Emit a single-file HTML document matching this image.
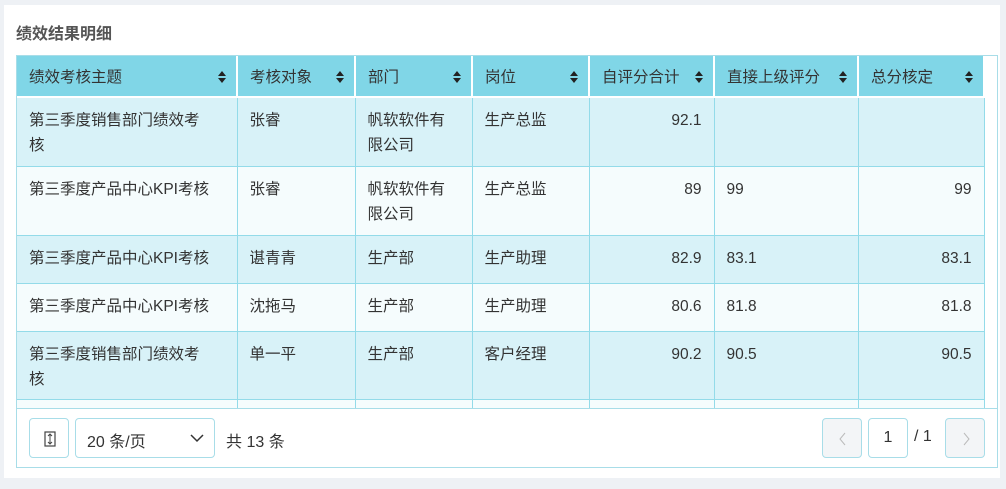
<!DOCTYPE html>
<html><head><meta charset="utf-8"><style>
*{box-sizing:border-box;margin:0;padding:0}
body{width:1006px;height:489px;background:#eef1f5;font-family:"Liberation Sans","Noto Sans CJK SC",sans-serif;color:#333;font-size:14px;position:relative;overflow:hidden}
.card{position:absolute;left:4px;top:5px;width:996px;height:473px;background:#fff}
.title{position:absolute;left:16px;top:20px;font-size:16px;font-weight:bold;color:#555}
.wrap{position:absolute;left:16px;top:55px;width:982px;height:413px;border:1px solid #a8dde8;overflow:hidden}
table{border-collapse:collapse;position:absolute;left:0;top:0;table-layout:fixed}
th{background:#80d6e7;height:41px;font-weight:normal;text-align:left;padding:0 12px;border-right:2px solid #fff;border-bottom:2px solid #fff;position:relative;font-size:15.5px;color:#333}
th .s{position:absolute;right:10px;top:14px;width:8px;height:14px}
td{border-right:1px solid #93dbe9;border-bottom:1px solid #93dbe9;padding:10px 12px 0 12px;vertical-align:top;line-height:25px;font-size:15.5px;white-space:nowrap}
tr.a td{background:#d8f2f8}
tr.b td{background:#f5fcfd}
td.r{text-align:right;padding-right:12px}
.foot{position:absolute;left:0;top:352px;width:980px;height:60px;background:#fff;border-top:1px solid #a8dde8}
.btn{position:absolute;top:9px;height:40px;border:1px solid #a8dde8;border-radius:4px;background:#fff}
</style></head><body>
<div class="card"></div>
<div class="title">绩效结果明细</div>
<div class="wrap">
<table>
<colgroup><col style="width:220px"><col style="width:118px"><col style="width:117px"><col style="width:117px"><col style="width:125px"><col style="width:144px"><col style="width:126px"></colgroup>
<tr>
<th>绩效考核主题<svg class="s" viewBox="0 0 8 14"><path d="M4 1L8 6H0z M4 13L0 8H8z" fill="#222"/></svg></th>
<th>考核对象<svg class="s" viewBox="0 0 8 14"><path d="M4 1L8 6H0z M4 13L0 8H8z" fill="#222"/></svg></th>
<th>部门<svg class="s" viewBox="0 0 8 14"><path d="M4 1L8 6H0z M4 13L0 8H8z" fill="#222"/></svg></th>
<th>岗位<svg class="s" viewBox="0 0 8 14"><path d="M4 1L8 6H0z M4 13L0 8H8z" fill="#222"/></svg></th>
<th>自评分合计<svg class="s" viewBox="0 0 8 14"><path d="M4 1L8 6H0z M4 13L0 8H8z" fill="#222"/></svg></th>
<th>直接上级评分<svg class="s" viewBox="0 0 8 14"><path d="M4 1L8 6H0z M4 13L0 8H8z" fill="#222"/></svg></th>
<th>总分核定<svg class="s" viewBox="0 0 8 14"><path d="M4 1L8 6H0z M4 13L0 8H8z" fill="#222"/></svg></th>
</tr>
<tr class="a" style="height:69px"><td>第三季度销售部门绩效考<br>核</td><td>张睿</td><td>帆软软件有<br>限公司</td><td>生产总监</td><td class="r">92.1</td><td></td><td></td></tr>
<tr class="b" style="height:69px"><td>第三季度产品中心KPI考核</td><td>张睿</td><td>帆软软件有<br>限公司</td><td>生产总监</td><td class="r">89</td><td>99</td><td class="r">99</td></tr>
<tr class="a" style="height:48px"><td>第三季度产品中心KPI考核</td><td>谌青青</td><td>生产部</td><td>生产助理</td><td class="r">82.9</td><td>83.1</td><td class="r">83.1</td></tr>
<tr class="b" style="height:48px"><td>第三季度产品中心KPI考核</td><td>沈拖马</td><td>生产部</td><td>生产助理</td><td class="r">80.6</td><td>81.8</td><td class="r">81.8</td></tr>
<tr class="a" style="height:68px"><td>第三季度销售部门绩效考<br>核</td><td>单一平</td><td>生产部</td><td>客户经理</td><td class="r">90.2</td><td>90.5</td><td class="r">90.5</td></tr>
<tr class="b" style="height:30px"><td></td><td></td><td></td><td></td><td></td><td></td><td></td></tr>
</table>
<div class="foot">
<div class="btn" style="left:12px;width:40px"><svg width="40" height="40" viewBox="0 0 40 40"><rect x="15" y="13" width="10" height="14" fill="none" stroke="#444" stroke-width="1.2"/><path d="M20 15v10M18 17l2-2 2 2M18 23l2 2 2-2" stroke="#444" fill="none" stroke-width="1"/></svg></div>
<div class="btn" style="left:58px;width:140px"><span style="position:absolute;left:11px;top:9px;font-size:16px">20 条/页</span><svg style="position:absolute;right:10px;top:13px" width="14" height="12" viewBox="0 0 14 12"><path d="M1 3l6 6 6-6" stroke="#333" fill="none" stroke-width="1.5"/></svg></div>
<span style="position:absolute;left:209px;top:19px;font-size:16px">共 13 条</span>
<div class="btn" style="left:805px;width:40px;background:#f3f5f7"><svg width="40" height="40"><path d="M22 14l-5 6 5 6" stroke="#bbb" fill="none"/></svg></div>
<div class="btn" style="left:851px;width:40px;text-align:center;line-height:38px;font-size:16px">1</div>
<span style="position:absolute;left:897px;top:19px;font-size:16px">/ 1</span>
<div class="btn" style="left:928px;width:40px;background:#f3f5f7"><svg width="40" height="40"><path d="M18 14l5 6-5 6" stroke="#bbb" fill="none"/></svg></div>
</div>
</div>
</body></html>
